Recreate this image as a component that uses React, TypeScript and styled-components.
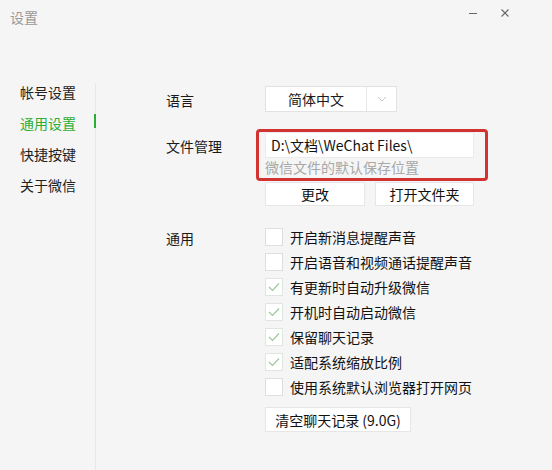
import React from "react";
import styled, { createGlobalStyle } from "styled-components";

const GlobalStyle = createGlobalStyle`
  html, body {
    margin: 0;
    padding: 0;
    background: #f5f5f5;
  }
  body {
    font-family: "Noto Sans CJK SC", "Open Sans", sans-serif;
    font-size: 14px;
    color: #1a1a1a;
  }
`;

const Window = styled.div`
  width: 552px;
  height: 470px;
  background: #f5f5f5;
  display: flex;
  flex-direction: column;
  overflow: hidden;
`;

const TitleBar = styled.div`
  height: 83px;
  display: flex;
  align-items: flex-start;
  justify-content: space-between;
  padding: 7px 0 0 10px;
  box-sizing: border-box;
`;

const Title = styled.div`
  font-size: 14px;
  line-height: 20px;
  color: #999;
`;

const WinControls = styled.div`
  display: flex;
  align-items: center;
  height: 14px;
  margin-top: -1px;
`;

const WinButton = styled.div`
  width: 32px;
  height: 14px;
  display: flex;
  align-items: center;
  justify-content: center;
  color: #777;
  &:last-child {
    margin-right: 31px;
  }
`;

const Body = styled.div`
  flex: 1;
  display: flex;
`;

const Sidebar = styled.div`
  width: 96px;
  border-right: 1px solid #e8e8e8;
  display: flex;
  flex-direction: column;
  gap: 13px;
  padding-left: 20px;
  box-sizing: border-box;
`;

const NavItem = styled.div<{ $active?: boolean }>`
  position: relative;
  height: 18px;
  line-height: 18px;
  font-size: 14px;
  color: ${(p) => (p.$active ? "#2aae36" : "#222")};
  &::after {
    content: "";
    display: ${(p) => (p.$active ? "block" : "none")};
    position: absolute;
    right: -1px;
    top: 0;
    width: 2px;
    height: 14px;
    background: #2aae36;
  }
`;

const Content = styled.div`
  flex: 1;
  padding-left: 70px;
  display: grid;
  grid-template-columns: 99px 1fr;
  align-content: start;
`;

const Label = styled.div<{ $top: number }>`
  padding-top: ${(p) => p.$top}px;
  font-size: 14px;
  line-height: 18px;
  color: #1a1a1a;
`;

const Select = styled.div`
  margin-top: 3px;
  width: 132px;
  height: 26px;
  box-sizing: border-box;
  background: #fff;
  border: 1px solid #e2e2e2;
  display: flex;
`;

const SelectText = styled.div`
  flex: 1;
  display: flex;
  align-items: center;
  justify-content: center;
  font-size: 14px;
`;

const SelectArrow = styled.div`
  width: 29px;
  border-left: 1px solid #e6e6e6;
  display: flex;
  align-items: center;
  justify-content: center;
`;

const FileBlock = styled.div`
  position: relative;
  margin-top: 20px;
  width: 209px;
`;

const Highlight = styled.div`
  position: absolute;
  left: -9px;
  right: -14px;
  top: -3px;
  height: 52px;
  box-sizing: border-box;
  border: 3px solid #d23330;
  border-radius: 4px;
  pointer-events: none;
`;

const PathInput = styled.div`
  height: 26px;
  box-sizing: border-box;
  background: #fff;
  border: 1px solid #ebebeb;
  padding-left: 5px;
  display: flex;
  align-items: center;
  font-size: 14px;
  color: #111;
`;

const Hint = styled.div`
  line-height: 18px;
  font-size: 14px;
  color: #a8a8a8;
`;

const ButtonRow = styled.div`
  display: flex;
  gap: 10px;
  margin-top: 6px;
`;

const Button = styled.div<{ $w: number }>`
  width: ${(p) => p.$w}px;
  height: 24px;
  box-sizing: border-box;
  background: #fff;
  border: 1px solid #e6e6e6;
  display: flex;
  align-items: center;
  justify-content: center;
  font-size: 14px;
  color: #111;
`;

const Options = styled.div`
  margin-top: 18px;
  display: flex;
  flex-direction: column;
`;

const OptionRow = styled.div`
  height: 25px;
  display: flex;
  align-items: center;
  gap: 7px;
  font-size: 14px;
  color: #111;
`;

const Box = styled.div<{ $checked?: boolean }>`
  width: 18px;
  height: 18px;
  box-sizing: border-box;
  background: #fff;
  border: 1px solid ${(p) => (p.$checked ? "#dfe6df" : "#dedede")};
  display: flex;
  align-items: center;
  justify-content: center;
`;

const ClearButton = styled.div`
  margin-top: 8px;
  width: 146px;
  height: 25px;
  box-sizing: border-box;
  background: #fff;
  border: 1px solid #e6e6e6;
  display: flex;
  align-items: center;
  justify-content: center;
  font-size: 14px;
  color: #111;
`;

const navItems = ["帐号设置", "通用设置", "快捷按键", "关于微信"];

const options: [string, boolean][] = [
  ["开启新消息提醒声音", false],
  ["开启语音和视频通话提醒声音", false],
  ["有更新时自动升级微信", true],
  ["开机时自动启动微信", true],
  ["保留聊天记录", true],
  ["适配系统缩放比例", true],
  ["使用系统默认浏览器打开网页", false],
];

const Check = () => (
  <svg width="12" height="10" viewBox="0 0 12 10">
    <path d="M1 5 L4.5 8.5 L11 1.5" fill="none" stroke="#9cc79c" strokeWidth="1.2" />
  </svg>
);

const App: React.FC = () => {
  return (
    <Window>
      <GlobalStyle />
      <TitleBar>
        <Title>设置</Title>
        <WinControls>
          <WinButton>
            <svg width="10" height="10" viewBox="0 0 10 10">
              <path d="M1 5.5 H9" stroke="#666" strokeWidth="1" />
            </svg>
          </WinButton>
          <WinButton>
            <svg width="10" height="10" viewBox="0 0 10 10">
              <path d="M1.5 1.5 L8.5 8.5 M8.5 1.5 L1.5 8.5" stroke="#666" strokeWidth="1.1" />
            </svg>
          </WinButton>
        </WinControls>
      </TitleBar>
      <Body>
        <Sidebar>
          {navItems.map((item) => (
            <NavItem key={item} $active={item === "通用设置"}>
              {item}
            </NavItem>
          ))}
        </Sidebar>
        <Content>
          <Label $top={8}>语言</Label>
          <div>
            <Select>
              <SelectText>简体中文</SelectText>
              <SelectArrow>
                <svg width="10" height="6" viewBox="0 0 10 6">
                  <path d="M1 1 L5 5 L9 1" fill="none" stroke="#c8c8c8" strokeWidth="1" />
                </svg>
              </SelectArrow>
            </Select>
          </div>
          <Label $top={25}>文件管理</Label>
          <div>
            <FileBlock>
              <PathInput>D:\文档\WeChat Files\</PathInput>
              <Hint>微信文件的默认保存位置</Hint>
              <Highlight />
            </FileBlock>
            <ButtonRow>
              <Button $w={100}>更改</Button>
              <Button $w={99}>打开文件夹</Button>
            </ButtonRow>
          </div>
          <Label $top={23}>通用</Label>
          <div>
            <Options>
              {options.map(([text, checked]) => (
                <OptionRow key={text}>
                  <Box $checked={checked}>{checked && <Check />}</Box>
                  {text}
                </OptionRow>
              ))}
            </Options>
            <ClearButton>清空聊天记录 (9.0G)</ClearButton>
          </div>
        </Content>
      </Body>
    </Window>
  );
};

export default App;
